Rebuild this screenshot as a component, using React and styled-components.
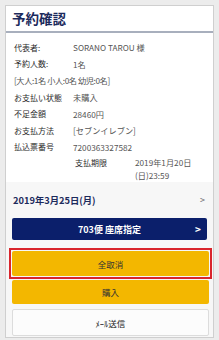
import React from "react";
import styled, { createGlobalStyle } from "styled-components";

const Global = createGlobalStyle`
  html, body { margin: 0; padding: 0; background: #ececec; }
  body { font-family: "Noto Sans CJK JP", "Noto Sans", "Liberation Sans", sans-serif; }
  * { box-sizing: border-box; }
`;

const Page = styled.div`
  padding: 5px 5px 2px 5px;
  width: 219px;
`;

const Card = styled.div`
  background: #fff;
  border: 1px solid #cfcfcf;
  height: 333px;
  display: flex;
  flex-direction: column;
`;

const Header = styled.div`
  height: 27px;
  flex: none;
  padding: 0 0 0 6px;
  display: flex;
  align-items: center;
  border-bottom: 2px solid #a8afbd;
`;

const Title = styled.h1`
  margin: 0;
  font-size: 13.5px;
  font-weight: 700;
  color: #1c2a5c;
  line-height: 1;
`;

const Info = styled.div`
  padding: 6px 8px 0 8px;
  display: flex;
  flex-direction: column;
  font-size: 8px;
  color: #555;
`;

const Row = styled.div`
  display: flex;
  align-items: center;
  height: ${(p) => p.h || 16.5}px;
  letter-spacing: ${(p) => p.ls || 0}px;
`;

const Label = styled.div`
  width: 59px;
  flex: none;
  color: #2a2a2a;
`;

const Value = styled.div`
  color: #555;
  white-space: nowrap;
  font-size: 8.2px;
`;

const Deadline = styled.div`
  display: flex;
  padding: 1px 0 0 61px;
  line-height: 13px;
`;

const DeadLabel = styled.div`
  width: 60px;
  flex: none;
  color: #2a2a2a;
`;

const Lower = styled.div`
  flex: 1;
  background: #f7f7f7;
  display: flex;
  flex-direction: column;
  padding: 0 1px 0 3px;
`;

const DateRow = styled.div`
  height: 31px;
  margin-top: 2px;
  display: flex;
  align-items: center;
  justify-content: space-between;
  padding: 0 7px 0 4px;
  font-size: 9.3px;
  font-weight: 700;
  color: #1c2a5c;
`;

const Chevron = styled.span`
  font-weight: 400;
  color: #666;
  font-size: 9px;
`;

const Button = styled.div`
  height: ${(p) => p.h || 24}px;
  margin: ${(p) => p.m || "0 3px"};
  border-radius: 2px;
  display: flex;
  align-items: center;
  justify-content: center;
  position: relative;
  font-size: ${(p) => p.fs || 8.5}px;
  font-weight: ${(p) => p.fw || 400};
  background: ${(p) => p.bg};
  color: ${(p) => p.color};
  border: ${(p) => p.border || "none"};
`;

const Focus = styled.div`
  border: 2px solid #d9252c;
  padding: 1px 1px 1px 1px;
  margin-top: 8px;
`;

const BtnArrow = styled.span`
  position: absolute;
  right: 6px;
  top: 50%;
  transform: translateY(-54%);
  font-size: 10px;
  font-weight: 700;
`;

export default function App() {
  return (
    <>
      <Global />
      <Page>
        <Card>
          <Header>
            <Title>予約確認</Title>
          </Header>
          <Info>
            <Row>
              <Label>代表者:</Label>
              <Value>SORANO TAROU 様</Value>
            </Row>
            <Row>
              <Label>予約人数:</Label>
              <Value>1名</Value>
            </Row>
            <Row ls={-0.4}>
              <Value>[大人:1名 小人:0名 幼児:0名]</Value>
            </Row>
            <Row h={17}>
              <Label>お支払い状態</Label>
              <Value>未購入</Value>
            </Row>
            <Row>
              <Label>不足金額</Label>
              <Value>28460円</Value>
            </Row>
            <Row>
              <Label>お支払方法</Label>
              <Value>[セブンイレブン]</Value>
            </Row>
            <Row>
              <Label>払込票番号</Label>
              <Value>7200363327582</Value>
            </Row>
            <Deadline>
              <DeadLabel>支払期限</DeadLabel>
              <Value>
                2019年1月20日
                <br />
                (日)23:59
              </Value>
            </Deadline>
          </Info>
          <Lower>
            <DateRow>
              <span>2019年3月25日(月)</span>
              <Chevron>&gt;</Chevron>
            </DateRow>
            <Button h={22} m="3px 5px 0 3px" bg="#0b1f6b" color="#fff" fw={700} fs={9}>
              703便 座席指定
              <BtnArrow>&gt;</BtnArrow>
            </Button>
            <Focus>
              <Button h={25} m="0" bg="#f3b700" color="#333">
                全取消
              </Button>
            </Focus>
            <Button h={24} m="1px 3px 0 3px" bg="#f3b700" color="#333">
              購入
            </Button>
            <Button
              h={27}
              m="5px 3px 0 3px"
              bg="#fcfcfc"
              color="#222"
              border="1px solid #dcdcdc"
            >
              ﾒｰﾙ送信
            </Button>
          </Lower>
        </Card>
      </Page>
    </>
  );
}
